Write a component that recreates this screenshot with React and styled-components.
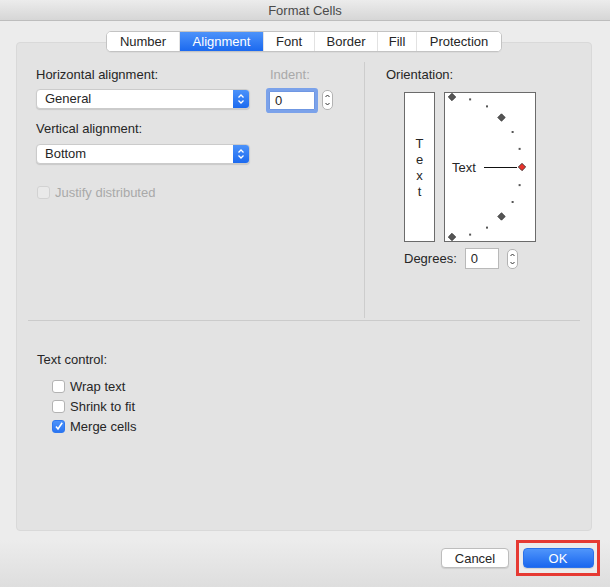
import React from "react";
import styled, { createGlobalStyle } from "styled-components";

const GlobalStyle = createGlobalStyle`
  body {
    margin: 0;
    font-family: "Liberation Sans", Arial, sans-serif;
    font-size: 13px;
    color: #262626;
  }
`;

const Window = styled.div`
  width: 610px;
  height: 587px;
  display: flex;
  flex-direction: column;
  background: linear-gradient(180deg, #ececec 0%, #ececec 92%, #dedede 100%);
  overflow: hidden;
`;

const TitleBar = styled.div`
  height: 20px;
  flex: none;
  display: flex;
  align-items: center;
  justify-content: center;
  background: linear-gradient(180deg, #ececec, #d6d6d6);
  border-bottom: 1px solid #bdbdbd;
  color: #4a4a4a;
  font-size: 13px;
`;

const Body = styled.div`
  display: flex;
  flex-direction: column;
  padding: 10px 0 0 16px;
`;

const Tabs = styled.div`
  align-self: center;
  margin-right: 18px;
  display: flex;
  height: 21px;
  box-sizing: border-box;
  background: #fff;
  border: 1px solid #c3c3c3;
  border-radius: 5px;
  overflow: hidden;
  position: relative;
  z-index: 1;
  box-shadow: 0 1px 0 rgba(0, 0, 0, 0.04);
`;

const Tab = styled.div`
  width: ${(p) => p.w}px;
  box-sizing: border-box;
  display: flex;
  align-items: center;
  justify-content: center;
  font-size: 13px;
  color: ${(p) => (p.active ? "#fff" : "#262626")};
  background: ${(p) =>
    p.active ? "linear-gradient(180deg, #4d93fa, #1b69ef)" : "#fff"};
  border-left: ${(p) => (p.first ? "none" : "1px solid #e2e2e2")};
`;

const Panel = styled.div`
  margin: -10px 18px 0 0;
  height: 487px;
  background: #e3e3e3;
  border: 1px solid #d9d9d9;
  border-radius: 4px;
  display: flex;
  flex-direction: column;
`;

const TopSection = styled.div`
  margin-top: 19px;
  height: 256px;
  display: flex;
`;

const LeftColumn = styled.div`
  width: 328px;
  padding: 5px 0 0 19px;
  border-right: 1px solid #cdcdcd;
  display: flex;
  flex-direction: column;
`;

const RightColumn = styled.div`
  flex: 1;
  padding: 5px 0 0 21px;
  display: flex;
  flex-direction: column;
`;

const Label = styled.div`
  height: 16px;
  line-height: 16px;
  font-size: 13px;
  color: ${(p) => (p.disabled ? "#a9a9a9" : "#262626")};
  margin-left: ${(p) => p.indent || 0}px;
`;

const FieldRow = styled.div`
  display: flex;
  align-items: flex-start;
`;

const FieldGroup = styled.div`
  display: flex;
  flex-direction: column;
  gap: ${(p) => p.gap || 6}px;
  margin-left: ${(p) => p.ml || 0}px;
  margin-top: ${(p) => p.mt || 0}px;
`;

const Select = styled.div`
  width: 214px;
  height: 20px;
  box-sizing: border-box;
  display: flex;
  background: #fff;
  border: 1px solid #cbcbcb;
  border-radius: 4px;
  box-shadow: 0 1px 1px rgba(0, 0, 0, 0.12);
  overflow: hidden;
`;

const SelectText = styled.div`
  flex: 1;
  padding-left: 8px;
  line-height: 18px;
  font-size: 13px;
`;

const SelectArrow = styled.div`
  width: 16px;
  background: linear-gradient(180deg, #4b92fa, #1c6aef);
  display: flex;
  align-items: center;
  justify-content: center;
`;

const InputRow = styled.div`
  display: flex;
  align-items: center;
  gap: ${(p) => p.gap || 7}px;
  margin-left: ${(p) => p.ml || 0}px;
`;

const NumberInput = styled.div`
  width: ${(p) => p.w}px;
  height: ${(p) => p.h}px;
  box-sizing: border-box;
  background: #fff;
  border: 1px solid #b9b9b9;
  padding-left: 5px;
  line-height: ${(p) => p.h - 2}px;
  font-size: 13px;
  box-shadow: ${(p) => (p.focused ? "0 0 0 3px #7ba2ea" : "none")};
  border-color: ${(p) => (p.focused ? "#6f97e2" : "#b9b9b9")};
  border-radius: ${(p) => (p.focused ? 1 : 0)}px;
`;

const Stepper = styled.div`
  width: 11px;
  height: 20px;
  box-sizing: border-box;
  background: #fff;
  border: 1px solid #b3b3b3;
  border-radius: 5px;
  display: flex;
  align-items: center;
  justify-content: center;
`;

const CheckRow = styled.label`
  display: flex;
  align-items: center;
  gap: 5px;
  height: 20px;
  font-size: 13px;
  color: ${(p) => (p.disabled ? "#a9a9a9" : "#262626")};
`;

const Box = styled.span`
  width: 13px;
  height: 13px;
  box-sizing: border-box;
  border-radius: 3px;
  display: flex;
  align-items: center;
  justify-content: center;
  background: ${(p) =>
    p.checked ? "linear-gradient(180deg, #4d93fa, #2a75f2)" : p.disabled ? "#e9e9e9" : "#fff"};
  border: 1px solid
    ${(p) => (p.checked ? "#2f78ef" : p.disabled ? "#d2d2d2" : "#b3b3b3")};
`;

const JustifyRow = styled.div`
  margin: 18px 0 0 1px;
`;

const Orientation = styled.div`
  display: flex;
  gap: 9px;
  margin: 9px 0 0 18px;
`;

const VerticalBox = styled.div`
  width: 31px;
  height: 150px;
  box-sizing: border-box;
  background: #fff;
  border: 1px solid #6b6b6b;
  display: flex;
  flex-direction: column;
  align-items: center;
  justify-content: center;
  line-height: 16px;
  font-size: 13px;
  padding-top: 2px;
`;

const ArcBox = styled.div`
  width: 92px;
  height: 150px;
  box-sizing: border-box;
  background: #fff;
  border: 1px solid #6b6b6b;
`;

const DegreesRow = styled.div`
  display: flex;
  align-items: center;
  margin: 6px 0 0 18px;
`;

const Divider = styled.div`
  height: 1px;
  margin: 2px 11px 0 11px;
  background: #cbcbcb;
`;

const BottomSection = styled.div`
  padding: 31px 0 0 20px;
  display: flex;
  flex-direction: column;
`;

const CheckList = styled.div`
  display: flex;
  flex-direction: column;
  margin: 8px 0 0 15px;
`;

const Footer = styled.div`
  display: flex;
  justify-content: flex-end;
  align-items: center;
  gap: 7px;
  padding: 9px 10px 0 0;
`;

const Button = styled.div`
  width: ${(p) => p.w}px;
  height: 20px;
  box-sizing: border-box;
  border-radius: 4px;
  display: flex;
  align-items: center;
  justify-content: center;
  font-size: 13px;
  color: ${(p) => (p.primary ? "#fff" : "#262626")};
  background: ${(p) =>
    p.primary ? "linear-gradient(180deg, #4f95fb, #1a67ef)" : "#fff"};
  border: 1px solid ${(p) => (p.primary ? "#2c72ea" : "#bdbdbd")};
  box-shadow: 0 1px 1px rgba(0, 0, 0, 0.1);
`;

const Highlight = styled.div`
  width: 84px;
  height: 36px;
  box-sizing: border-box;
  border: 3px solid #e63a33;
  background: #ececec;
  display: flex;
  align-items: center;
  justify-content: center;
`;

const Chevrons = ({ color = "#fff" }) => (
  <svg width="8" height="12" viewBox="0 0 8 12">
    <path d="M1.5 4.5 L4 2 L6.5 4.5" fill="none" stroke={color} strokeWidth="1.3" />
    <path d="M1.5 7.5 L4 10 L6.5 7.5" fill="none" stroke={color} strokeWidth="1.3" />
  </svg>
);

const StepperArrows = () => (
  <svg width="7" height="16" viewBox="0 0 7 16">
    <path d="M1.5 5 L3.5 3 L5.5 5" fill="none" stroke="#333" strokeWidth="1" />
    <path d="M1.5 11 L3.5 13 L5.5 11" fill="none" stroke="#333" strokeWidth="1" />
  </svg>
);

const Check = () => (
  <svg width="10" height="10" viewBox="0 0 10 10">
    <path d="M2 5.5 L4 8 L8.2 1.8" fill="none" stroke="#fff" strokeWidth="1.6" />
  </svg>
);

const Diamond = ({ x, y, fill }) => (
  <rect
    x={x - 2.6}
    y={y - 2.6}
    width="5.2"
    height="5.2"
    fill={fill}
    stroke="#333"
    strokeWidth="0.8"
    transform={`rotate(45 ${x} ${y})`}
  />
);

const OrientationDial = () => {
  const cx = 7;
  const cy = 74;
  const r = 70;
  const marks = [];
  for (let a = -90; a <= 90; a += 15) {
    const rad = (a * Math.PI) / 180;
    const x = cx + r * Math.cos(rad);
    const y = cy + r * Math.sin(rad);
    if (a % 45 === 0) {
      marks.push(<Diamond key={a} x={x} y={y} fill={a === 0 ? "#e8322b" : "#555"} />);
    } else {
      marks.push(<rect key={a} x={x - 1} y={y - 1} width="2" height="2" fill="#555" />);
    }
  }
  return (
    <svg width="90" height="148" viewBox="0 0 90 148">
      <text x="7" y="79" fontSize="13" fill="#262626" fontFamily="Liberation Sans, Arial, sans-serif">
        Text
      </text>
      <line x1="39" y1="74.5" x2="72" y2="74.5" stroke="#111" strokeWidth="1" />
      {marks}
    </svg>
  );
};

const tabs = [
  { name: "Number", w: 72 },
  { name: "Alignment", w: 84 },
  { name: "Font", w: 51 },
  { name: "Border", w: 63 },
  { name: "Fill", w: 39 },
  { name: "Protection", w: 85 },
];

export default function App() {
  return (
    <Window>
      <GlobalStyle />
      <TitleBar>Format Cells</TitleBar>
      <Body>
        <Tabs>
          {tabs.map((t, i) => (
            <Tab key={t.name} w={t.w} first={i === 0} active={t.name === "Alignment"}>
              {t.name}
            </Tab>
          ))}
        </Tabs>
        <Panel>
          <TopSection>
            <LeftColumn>
              <FieldRow>
                <FieldGroup>
                  <Label>Horizontal alignment:</Label>
                  <Select>
                    <SelectText>General</SelectText>
                    <SelectArrow>
                      <Chevrons />
                    </SelectArrow>
                  </Select>
                </FieldGroup>
                <FieldGroup ml={19} gap={7}>
                  <Label disabled indent={1}>Indent:</Label>
                  <InputRow>
                    <NumberInput w={46} h={19} focused>
                      0
                    </NumberInput>
                    <Stepper>
                      <StepperArrows />
                    </Stepper>
                  </InputRow>
                </FieldGroup>
              </FieldRow>
              <FieldGroup gap={7} mt={11}>
                <Label>Vertical alignment:</Label>
                <Select>
                  <SelectText>Bottom</SelectText>
                  <SelectArrow>
                    <Chevrons />
                  </SelectArrow>
                </Select>
              </FieldGroup>
              <JustifyRow>
                <CheckRow disabled>
                  <Box disabled />
                  Justify distributed
                </CheckRow>
              </JustifyRow>
            </LeftColumn>
            <RightColumn>
              <Label>Orientation:</Label>
              <Orientation>
                <VerticalBox>
                  <span>T</span>
                  <span>e</span>
                  <span>x</span>
                  <span>t</span>
                </VerticalBox>
                <ArcBox>
                  <OrientationDial />
                </ArcBox>
              </Orientation>
              <DegreesRow>
                <Label>Degrees:</Label>
                <InputRow gap={8} ml={8}>
                  <NumberInput w={34} h={21}>
                    0
                  </NumberInput>
                  <Stepper>
                    <StepperArrows />
                  </Stepper>
                </InputRow>
              </DegreesRow>
            </RightColumn>
          </TopSection>
          <Divider />
          <BottomSection>
            <Label>Text control:</Label>
            <CheckList>
              <CheckRow>
                <Box />
                Wrap text
              </CheckRow>
              <CheckRow>
                <Box />
                Shrink to fit
              </CheckRow>
              <CheckRow>
                <Box checked>
                  <Check />
                </Box>
                Merge cells
              </CheckRow>
            </CheckList>
          </BottomSection>
        </Panel>
        <Footer>
          <Button w={68}>Cancel</Button>
          <Highlight>
            <Button primary w={71}>
              OK
            </Button>
          </Highlight>
        </Footer>
      </Body>
    </Window>
  );
}
